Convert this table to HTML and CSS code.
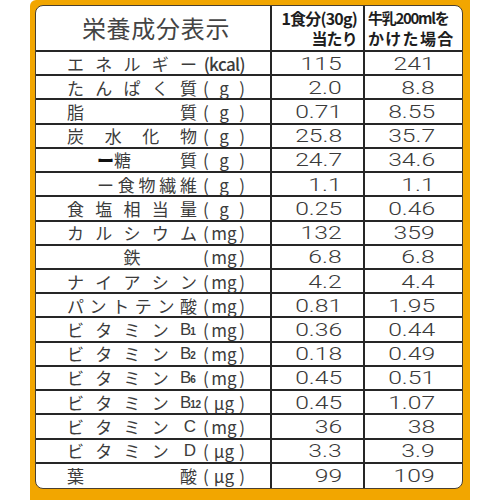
FILE: index.html
```html
<!DOCTYPE html>
<html lang="ja">
<head>
<meta charset="utf-8">
<link rel="stylesheet" href="styles.css">
</head>
<body>
<div class="frame">
  <div class="card">
    <div class="grid">
      <div class="cell head title">栄養成分表示</div>
      <div class="cell head h2"><span>1食分(30g)</span><span>当たり</span></div>
      <div class="cell head h3"><span class="l1">牛乳200mlを</span><span class="l2">かけた場合</span></div>

      <div class="cell label"><span class="name"><span>エ</span><span>ネ</span><span>ル</span><span>ギ</span><span>ー</span></span><span class="unit kcal"><span>(kcal)</span></span></div>
      <div class="cell num c2"><span class="v">115</span></div>
      <div class="cell num c3"><span class="v">241</span></div>

      <div class="cell label"><span class="name"><span>た</span><span>ん</span><span>ぱ</span><span>く</span><span>質</span></span><span class="unit"><span>(</span><span>g</span><span>)</span></span></div>
      <div class="cell num c2"><span class="v">2.0</span></div>
      <div class="cell num c3"><span class="v">8.8</span></div>

      <div class="cell label"><span class="name"><span>脂</span><span>質</span></span><span class="unit"><span>(</span><span>g</span><span>)</span></span></div>
      <div class="cell num c2"><span class="v">0.71</span></div>
      <div class="cell num c3"><span class="v">8.55</span></div>

      <div class="cell label"><span class="name"><span>炭</span><span>水</span><span>化</span><span>物</span></span><span class="unit"><span>(</span><span>g</span><span>)</span></span></div>
      <div class="cell num c2"><span class="v">25.8</span></div>
      <div class="cell num c3"><span class="v">35.7</span></div>

      <div class="cell label"><span class="name indent"><span><b class="dash">ー</b>糖</span><span>質</span></span><span class="unit"><span>(</span><span>g</span><span>)</span></span></div>
      <div class="cell num c2"><span class="v">24.7</span></div>
      <div class="cell num c3"><span class="v">34.6</span></div>

      <div class="cell label"><span class="name indent"><span>ー</span><span>食</span><span>物</span><span>繊</span><span>維</span></span><span class="unit"><span>(</span><span>g</span><span>)</span></span></div>
      <div class="cell num c2"><span class="v">1.1</span></div>
      <div class="cell num c3"><span class="v">1.1</span></div>

      <div class="cell label"><span class="name"><span>食</span><span>塩</span><span>相</span><span>当</span><span>量</span></span><span class="unit"><span>(</span><span>g</span><span>)</span></span></div>
      <div class="cell num c2"><span class="v">0.25</span></div>
      <div class="cell num c3"><span class="v">0.46</span></div>

      <div class="cell label"><span class="name"><span>カ</span><span>ル</span><span>シ</span><span>ウ</span><span>ム</span></span><span class="unit"><span>(</span><span>mg</span><span>)</span></span></div>
      <div class="cell num c2"><span class="v">132</span></div>
      <div class="cell num c3"><span class="v">359</span></div>

      <div class="cell label"><span class="name center"><span>鉄</span></span><span class="unit"><span>(</span><span>mg</span><span>)</span></span></div>
      <div class="cell num c2"><span class="v">6.8</span></div>
      <div class="cell num c3"><span class="v">6.8</span></div>

      <div class="cell label"><span class="name"><span>ナ</span><span>イ</span><span>ア</span><span>シ</span><span>ン</span></span><span class="unit"><span>(</span><span>mg</span><span>)</span></span></div>
      <div class="cell num c2"><span class="v">4.2</span></div>
      <div class="cell num c3"><span class="v">4.4</span></div>

      <div class="cell label"><span class="name"><span>パ</span><span>ン</span><span>ト</span><span>テ</span><span>ン</span><span>酸</span></span><span class="unit"><span>(</span><span>mg</span><span>)</span></span></div>
      <div class="cell num c2"><span class="v">0.81</span></div>
      <div class="cell num c3"><span class="v">1.95</span></div>

      <div class="cell label"><span class="name"><span>ビ</span><span>タ</span><span>ミ</span><span>ン</span><span class="vit">B<small>1</small></span></span><span class="unit"><span>(</span><span>mg</span><span>)</span></span></div>
      <div class="cell num c2"><span class="v">0.36</span></div>
      <div class="cell num c3"><span class="v">0.44</span></div>

      <div class="cell label"><span class="name"><span>ビ</span><span>タ</span><span>ミ</span><span>ン</span><span class="vit">B<small>2</small></span></span><span class="unit"><span>(</span><span>mg</span><span>)</span></span></div>
      <div class="cell num c2"><span class="v">0.18</span></div>
      <div class="cell num c3"><span class="v">0.49</span></div>

      <div class="cell label"><span class="name"><span>ビ</span><span>タ</span><span>ミ</span><span>ン</span><span class="vit">B<small>6</small></span></span><span class="unit"><span>(</span><span>mg</span><span>)</span></span></div>
      <div class="cell num c2"><span class="v">0.45</span></div>
      <div class="cell num c3"><span class="v">0.51</span></div>

      <div class="cell label"><span class="name"><span>ビ</span><span>タ</span><span>ミ</span><span>ン</span><span class="vit">B<small>12</small></span></span><span class="unit"><span>(</span><span>μg</span><span>)</span></span></div>
      <div class="cell num c2"><span class="v">0.45</span></div>
      <div class="cell num c3"><span class="v">1.07</span></div>

      <div class="cell label"><span class="name"><span>ビ</span><span>タ</span><span>ミ</span><span>ン</span><span class="vit">&nbsp;C</span></span><span class="unit"><span>(</span><span>mg</span><span>)</span></span></div>
      <div class="cell num c2"><span class="v">36</span></div>
      <div class="cell num c3"><span class="v">38</span></div>

      <div class="cell label"><span class="name"><span>ビ</span><span>タ</span><span>ミ</span><span>ン</span><span class="vit">&nbsp;D</span></span><span class="unit"><span>(</span><span>μg</span><span>)</span></span></div>
      <div class="cell num c2"><span class="v">3.3</span></div>
      <div class="cell num c3"><span class="v">3.9</span></div>

      <div class="cell label last"><span class="name"><span>葉</span><span>酸</span></span><span class="unit"><span>(</span><span>μg</span><span>)</span></span></div>
      <div class="cell num c2 last"><span class="v">99</span></div>
      <div class="cell num c3 last"><span class="v">109</span></div>
    </div>
  </div>
</div>
</body>
</html>
```

FILE: styles.css
```css
html, body {
  margin: 0;
  padding: 0;
  background: #ffffff;
}

body {
  font-family: "Noto Sans CJK JP", "Noto Sans", sans-serif;
  color: #3c3c3c;
}

.frame {
  width: 440px;
  height: 500px;
  margin-left: 30px;
  box-sizing: border-box;
  padding: 5px 7px 11px 5px;
  background: #f2a600;
  border-radius: 6px 0 0 0;
}

.card {
  height: 484px;
  box-sizing: border-box;
  background: #ffffff;
  border: 1px solid #4a4030;
  border-radius: 8px;
  overflow: hidden;
}

.grid {
  display: grid;
  grid-template-columns: 236px 93px 1fr;
  grid-template-rows: 46px repeat(18, 1fr);
  height: 482px;
}

.cell {
  display: flex;
  align-items: center;
  box-sizing: border-box;
  border-bottom: 2px solid #262626;
  border-right: 2px solid #262626;
  min-width: 0;
}

.cell.c3 {
  border-right: none;
}

.cell.last {
  border-bottom: none;
}

.head {
  line-height: 1;
}

.title {
  justify-content: center;
  padding-left: 6px;
  font-size: 24px;
  letter-spacing: 0.7px;
  color: #444;
}

.h2, .h3 {
  flex-direction: column;
  justify-content: center;
  align-items: flex-end;
  font-weight: 700;
  color: #1e1e1e;
  font-size: 16px;
  line-height: 20px;
  letter-spacing: -0.8px;
  white-space: nowrap;
}

.h2 {
  padding-right: 6px;
}

.h3 {
  border-right: none;
  align-items: flex-start;
  padding-left: 3px;
  padding-right: 4px;
  font-size: 15px;
}

.h3 .l1 {
  letter-spacing: -1.3px;
}

.h3 .l2 {
  font-size: 16px;
  letter-spacing: 1.3px;
}

.label {
  padding-left: 31px;
  padding-right: 25px;
  font-size: 17px;
  line-height: 1;
}

.name {
  flex: 1;
  display: flex;
  justify-content: space-between;
  align-items: center;
}

.name.indent {
  padding-left: 30px;
}

.name.center {
  justify-content: center;
}

.dash {
  font-weight: 900;
  color: #111;
}

.vit {
  font-family: "Liberation Sans", sans-serif;
  font-size: 17px;
  width: 17px;
  white-space: nowrap;
  letter-spacing: -1px;
}

.vit small {
  font-size: 10px;
  font-weight: 700;
  letter-spacing: -0.5px;
}

.unit {
  width: 48px;
  box-sizing: border-box;
  padding-left: 6px;
  display: flex;
  justify-content: space-between;
  align-items: center;
  font-size: 17px;
}

.unit.kcal {
  justify-content: flex-end;
  padding-left: 0;
  letter-spacing: -0.6px;
  font-weight: 500;
}

.num {
  justify-content: flex-end;
  font-family: "Roboto", "Liberation Sans", sans-serif;
  font-weight: 300;
  font-size: 19px;
  line-height: 1;
  color: #3a3a3a;
}

.num .v {
  display: inline-block;
  transform: scaleX(1.3);
  transform-origin: right center;
}

.c2 {
  padding-right: 21px;
}

.c3 {
  padding-right: 27px;
}
```
